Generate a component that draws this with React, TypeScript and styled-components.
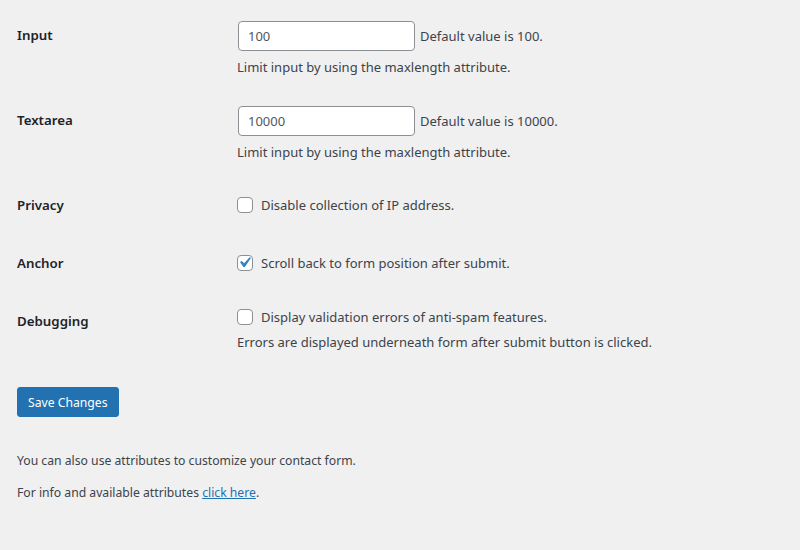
import styled, { createGlobalStyle } from 'styled-components'

const GlobalStyle = createGlobalStyle`
  html, body {
    margin: 0;
    background: #f0f0f1;
  }
  body {
    color: #3c434a;
    font-family: 'Noto Sans', 'Open Sans', sans-serif;
    font-size: 12.2px;
    line-height: 1.4;
  }
`

const Page = styled.div`
  padding: 6px 20px 20px 17px;
`

const Row = styled.div`
  display: flex;
  align-items: flex-start;
`

const Label = styled.div`
  width: 200px;
  padding: 20px 10px 20px 0;
  font-size: 13.3px;
  font-weight: 600;
  line-height: 18px;
  color: #1d2327;
`

const Field = styled.div`
  padding: 15px 10px;
  font-size: 13px;
  line-height: 18px;
`

const InputLine = styled.div`
  display: flex;
  align-items: center;
  gap: 5px;
`

const TextInput = styled.input`
  box-sizing: border-box;
  width: 177px;
  height: 30px;
  margin-left: 1px;
  padding: 0 9px;
  border: 1px solid #8c8f94;
  border-radius: 4px;
  background: #fff;
  color: #50575e;
  font-family: inherit;
  font-size: 13px;
  outline: none;
`

const Description = styled.p`
  margin: 7px 0 0;
  color: #3c434a;
`

const CheckLine = styled.label<{ $offset?: number }>`
  display: flex;
  align-items: center;
  gap: 8px;
  margin-top: ${p => p.$offset ?? 0}px;
`

const Box = styled.span`
  box-sizing: border-box;
  flex: none;
  width: 16px;
  height: 16px;
  border: 1px solid #8c8f94;
  border-radius: 4px;
  background: #fff;
  position: relative;
  overflow: visible;
`

const Tick = styled.svg`
  position: absolute;
  left: -4px;
  top: -4px;
  width: 21px;
  height: 21px;
`

const SaveButton = styled.button`
  margin-top: 21px;
  height: 30px;
  padding: 0 10px;
  border: 1px solid #2271b1;
  border-radius: 3px;
  background: #2271b1;
  color: #fff;
  font-family: inherit;
  font-size: 12.2px;
`

const Note = styled.p`
  margin: 35px 0 0;
`

const NoteNext = styled(Note)`
  margin-top: 15px;
`

const Link = styled.a`
  color: #2271b1;
  text-decoration: underline;
`

function Checkbox({ checked }: { checked?: boolean }) {
  return (
    <Box>
      {checked && (
        <Tick viewBox='0 0 20 20'>
          <path d='M14.83 4.89l1.34.94-5.81 8.38H9.02L5.78 9.67l1.34-1.25 2.57 2.4z' fill='#3582c4' />
        </Tick>
      )}
    </Box>
  )
}

export default function App() {
  return (
    <Page>
      <GlobalStyle />
      <Row>
        <Label>Input</Label>
        <Field>
          <InputLine>
            <TextInput defaultValue='100' />
            <span>Default value is 100.</span>
          </InputLine>
          <Description>Limit input by using the maxlength attribute.</Description>
        </Field>
      </Row>
      <Row>
        <Label>Textarea</Label>
        <Field>
          <InputLine>
            <TextInput defaultValue='10000' />
            <span>Default value is 10000.</span>
          </InputLine>
          <Description>Limit input by using the maxlength attribute.</Description>
        </Field>
      </Row>
      <Row>
        <Label>Privacy</Label>
        <Field>
          <CheckLine $offset={5}>
            <Checkbox />
            Disable collection of IP address.
          </CheckLine>
        </Field>
      </Row>
      <Row>
        <Label>Anchor</Label>
        <Field>
          <CheckLine $offset={5}>
            <Checkbox checked />
            Scroll back to form position after submit.
          </CheckLine>
        </Field>
      </Row>
      <Row>
        <Label>Debugging</Label>
        <Field>
          <CheckLine $offset={1}>
            <Checkbox />
            Display validation errors of anti-spam features.
          </CheckLine>
          <Description>Errors are displayed underneath form after submit button is clicked.</Description>
        </Field>
      </Row>
      <SaveButton>Save Changes</SaveButton>
      <Note>You can also use attributes to customize your contact form.</Note>
      <NoteNext>
        For info and available attributes <Link href='#'>click here</Link>.
      </NoteNext>
    </Page>
  )
}
